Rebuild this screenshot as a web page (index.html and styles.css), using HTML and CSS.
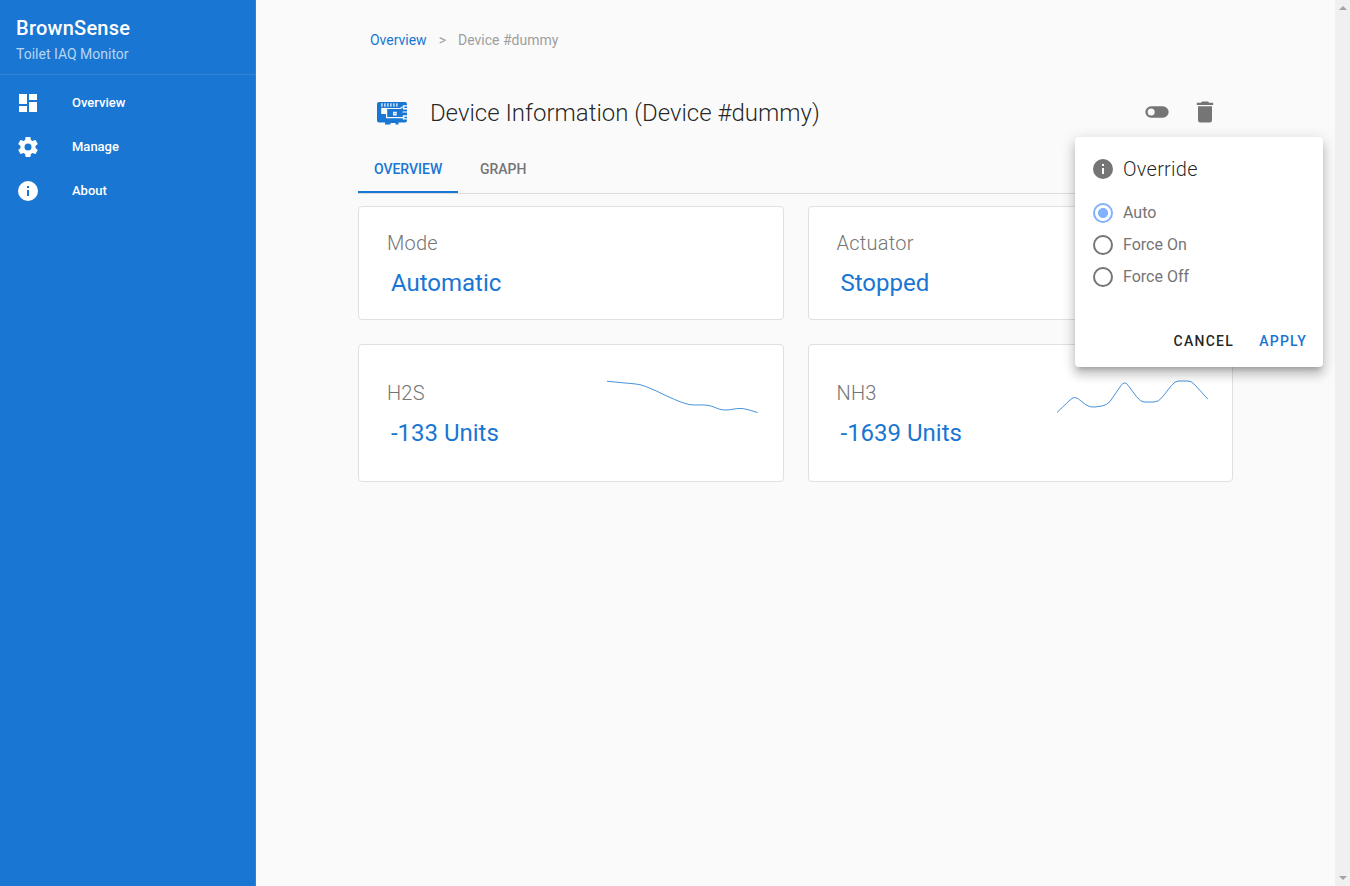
FILE: index.html
```html
<!DOCTYPE html>
<html lang="en">
<head>
<meta charset="utf-8">
<title>BrownSense</title>
<link rel="stylesheet" href="styles.css">
</head>
<body>
<div class="app">
  <nav class="sidebar">
    <header class="brand">
      <div class="brand-title">BrownSense</div>
      <div class="brand-sub">Toilet IAQ Monitor</div>
    </header>
    <a class="nav-item"><svg class="icon" viewBox="0 0 24 24"><path d="M13,3V9H21V3M13,21H21V11H13M3,21H11V15H3M3,13H11V3H3V13Z"/></svg><span>Overview</span></a>
    <a class="nav-item"><svg class="icon" viewBox="0 0 24 24"><path d="M12,15.5A3.5,3.5 0 0,1 8.5,12A3.5,3.5 0 0,1 12,8.5A3.5,3.5 0 0,1 15.5,12A3.5,3.5 0 0,1 12,15.5M19.43,12.97C19.47,12.65 19.5,12.33 19.5,12C19.5,11.67 19.47,11.34 19.43,11L21.54,9.37C21.73,9.22 21.78,8.95 21.66,8.73L19.66,5.27C19.54,5.05 19.27,4.96 19.05,5.05L16.56,6.05C16.04,5.66 15.5,5.32 14.87,5.07L14.5,2.42C14.46,2.18 14.25,2 14,2H10C9.75,2 9.54,2.18 9.5,2.42L9.13,5.07C8.5,5.32 7.96,5.66 7.44,6.05L4.95,5.05C4.73,4.96 4.46,5.05 4.34,5.27L2.34,8.73C2.21,8.95 2.27,9.22 2.46,9.37L4.57,11C4.53,11.34 4.5,11.67 4.5,12C4.5,12.33 4.53,12.65 4.57,12.97L2.46,14.63C2.27,14.78 2.21,15.05 2.34,15.27L4.34,18.73C4.46,18.95 4.73,19.03 4.95,18.95L7.44,17.94C7.96,18.34 8.5,18.68 9.13,18.93L9.5,21.58C9.54,21.82 9.75,22 10,22H14C14.25,22 14.46,21.82 14.5,21.58L14.87,18.93C15.5,18.67 16.04,18.34 16.56,17.94L19.05,18.95C19.27,19.03 19.54,18.95 19.66,18.73L21.66,15.27C21.78,15.05 21.73,14.78 21.54,14.63L19.43,12.97Z"/></svg><span>Manage</span></a>
    <a class="nav-item"><svg class="icon" viewBox="0 0 24 24"><path d="M13,9H11V7H13M13,17H11V11H13M12,2A10,10 0 0,0 2,12A10,10 0 0,0 12,22A10,10 0 0,0 22,12A10,10 0 0,0 12,2Z"/></svg><span>About</span></a>
  </nav>

  <main class="content">
    <div class="breadcrumbs"><a>Overview</a><span class="divider">&gt;</span><span>Device #dummy</span></div>

    <div class="title-row">
      <svg class="device-icon" viewBox="0 0 30 24">
        <path class="board" d="M2,0H28A2,2 0 0 1 30,2V18.5A2,2 0 0 1 28,20.5H21.5V22.5H18.5V21H13.5V22.5H8V20.5H2A2,2 0 0 1 0,18.5V2A2,2 0 0 1 2,0Z"/>
        <path class="trace" d="M4.9,1.3V4.7M7.9,1.3V4.7M10.9,1.3V4.7M13.9,1.3V4.7M16.9,1.3V4.7M19.9,1.3V4.7"/>
        <path class="gap" d="M4.2,5.9H10V12H4.2Z"/>
        <path class="trace" d="M9.6,6.5V15.6H26.5M9,6.5H23.5L25.5,4.8"/>
        <path class="gap" d="M16,9.8H19.7V13.5H16ZM25.8,3.2H30V7.5H25.8ZM25.8,13.3H30V17.6H25.8ZM25.5,9.4H30V10.5H25.5Z"/>
        <path class="board" d="M17.4,11.1H18.4V12.1H17.4ZM27.4,4.6H30V6.1H27.4ZM27.4,14.7H30V16.2H27.4Z"/>
      </svg>
      <h1>Device Information (Device #dummy)</h1>
      <div class="actions">
        <svg viewBox="0 0 24 24"><path d="M17,7H7A5,5 0 0,0 2,12A5,5 0 0,0 7,17H17A5,5 0 0,0 22,12A5,5 0 0,0 17,7M7,15A3,3 0 0,1 4,12A3,3 0 0,1 7,9A3,3 0 0,1 10,12A3,3 0 0,1 7,15Z"/></svg>
        <svg viewBox="0 0 24 24"><path d="M19,4H15.5L14.5,3H9.5L8.5,4H5V6H19V4M6,19A2,2 0 0,0 8,21H16A2,2 0 0,0 18,19V7H6V19Z"/></svg>
      </div>
    </div>

    <div class="tabs"><a class="tab active">OVERVIEW</a><a class="tab">GRAPH</a></div>

    <div class="cards">
      <section class="card"><div><h2>Mode</h2><p>Automatic</p></div></section>
      <section class="card"><div><h2>Actuator</h2><p>Stopped</p></div></section>
      <section class="card tall"><div><h2>H2S</h2><p>-133 Units</p></div>
        <svg class="spark" viewBox="0 0 152 40"><path d="M1,5.2L18,6.9L29,7.9Q34,8.3 39,10.2Q51,15 62,20.6Q76,27 83,28.5C89,29.5 94,28.5 101,29.2C108,30 112,33.8 118,34C124,34.4 128,32.4 135,32.4Q139,32.5 151.5,36.5"/></svg></section>
      <section class="card tall"><div><h2>NH3</h2><p>-1639 Units</p></div>
        <svg class="spark" viewBox="0 0 152 40"><path d="M1,36.5L14,24Q18,19.8 22.5,23L29.5,28.5Q34,31.8 39,31L46,30Q51,29 54,25.5L65,9.5Q68.5,4.5 72,9.2L80.5,20.7Q84.5,26 88,26L98,26Q102.5,26 106,21.5L115.5,9.5Q119,5 122.5,5H132Q135.5,5 139,9L152,23.3"/></svg></section>
    </div>
  </main>

  <div class="scrollbar"><i class="up"></i><i class="down"></i></div>

  <div class="menu">
    <div class="menu-title"><svg class="icon" viewBox="0 0 24 24"><path d="M13,9H11V7H13M13,17H11V11H13M12,2A10,10 0 0,0 2,12A10,10 0 0,0 12,22A10,10 0 0,0 22,12A10,10 0 0,0 12,2Z"/></svg><span>Override</span></div>
    <div class="radio checked"><i></i><span>Auto</span></div>
    <div class="radio"><i></i><span>Force On</span></div>
    <div class="radio"><i></i><span>Force Off</span></div>
    <div class="menu-actions"><a>CANCEL</a><a class="primary">APPLY</a></div>
  </div>
</div>
</body>
</html>
```

FILE: styles.css
```css
* { box-sizing: border-box; }
body { margin: 0; font-family: Roboto, sans-serif; color: rgba(0,0,0,.87); background: #fafafa; overflow: hidden; }
h1, h2, p { margin: 0; }
.app { display: flex; height: 886px; position: relative; }

.sidebar { width: 256px; flex: none; background: #1976d2; border-right: 1px solid #3083d6; color: #fff; }
.brand { height: 75px; padding: 12px 16px 0; border-bottom: 1px solid #3083d6; margin-bottom: 6px; }
.brand-title { font-size: 20px; font-weight: 500; line-height: 32px; letter-spacing: .25px; }
.brand-sub { font-size: 14px; line-height: 20px; color: rgba(255,255,255,.7); }
.nav-item { display: flex; align-items: center; gap: 32px; height: 44px; padding: 0 16px; font-size: 13px; font-weight: 500; }
.nav-item span { padding-bottom: 2px; }
.icon { width: 24px; height: 24px; fill: currentColor; flex: none; }

.content { flex: 1; padding: 30px 101.9px 0; }
.breadcrumbs { display: flex; padding-left: 12px; font-size: 14px; line-height: 20px; color: #9e9e9e; }
.breadcrumbs a { color: #1976d2; }
.divider { width: 31.4px; text-align: center; }
.title-row { display: flex; align-items: center; height: 48px; margin-top: 39px; padding: 0 14px 0 19px; }
.device-icon { width: 30px; height: 24px; margin-top: 2px; }
.board { fill: #1976d2; }
.gap { fill: #fafafa; }
.trace { fill: none; stroke: #fafafa; stroke-width: 1.2; }
h1 { font-size: 24px; font-weight: 300; line-height: 32px; margin-left: 23px; }
.actions { display: flex; gap: 20px; margin-left: auto; padding-bottom: 2px; }
.actions svg { width: 28px; height: 28px; fill: #757575; }
.tabs { display: flex; height: 49px; margin-top: 8px; border-bottom: 1px solid #dcdcdc; margin-bottom: 12px; }
.tab { height: 48px; padding: 0 16px; font-size: 14px; font-weight: 500; line-height: 48px; color: #757575; margin-right: 5.7px; }
.tab.active { color: #1976d2; border-bottom: 2px solid #1976d2; }

.cards { display: grid; grid-template-columns: 1fr 1fr; gap: 24px; }
.card { display: flex; justify-content: space-between; height: 114px; padding: 20px 25px 0 28px; background: #fff; border: 1px solid #e0e0e0; border-radius: 4px; }
.card.tall { height: 138px; padding-top: 32px; }
.card h2 { font-size: 20px; font-weight: 300; line-height: 32px; letter-spacing: .25px; color: #757575; }
.card p { font-size: 24px; line-height: 32px; margin-top: 8px; padding-left: 4px; color: #1976d2; }
.spark { width: 152px; height: 40px; margin-top: -.6px; margin-right: -.4px; fill: none; stroke: #1976d2; stroke-width: .8; }

.scrollbar { width: 15px; flex: none; background: #f0f0f0; display: flex; flex-direction: column; justify-content: space-between; align-items: center; padding: 6px 0; }
.scrollbar i { width: 0; border: 4px solid transparent; }
.scrollbar .up { border-top: 0; border-bottom-color: #a3a3a3; }
.scrollbar .down { border-bottom: 0; border-top-color: #a3a3a3; }

.menu { position: absolute; left: 1075px; top: 137px; width: 248px; height: 230px; padding: 16px; background: #fff; border-radius: 4px; box-shadow: 0 5px 5px -3px rgba(0,0,0,.2), 0 8px 10px 1px rgba(0,0,0,.14), 0 3px 14px 2px rgba(0,0,0,.12); }
.menu-title { display: flex; align-items: center; gap: 8px; height: 32px; margin-bottom: 12px; font-size: 20px; font-weight: 300; letter-spacing: .25px; }
.menu-title .icon { color: #757575; }
.radio { display: flex; align-items: center; gap: 10px; height: 32px; padding-left: 2px; font-size: 16px; color: #757575; }
.radio span { padding-bottom: 2px; }
.radio i { width: 20px; height: 20px; border: 2px solid #757575; border-radius: 50%; }
.radio.checked i { border-color: #82b1ff; background: radial-gradient(circle, #82b1ff 4.7px, #fff 5.3px); }
.menu-actions { display: flex; justify-content: flex-end; gap: 25.2px; margin-top: 32px; font-size: 14px; font-weight: 500; line-height: 32px; letter-spacing: 1.25px; }
.primary { color: #1976d2; }
```
